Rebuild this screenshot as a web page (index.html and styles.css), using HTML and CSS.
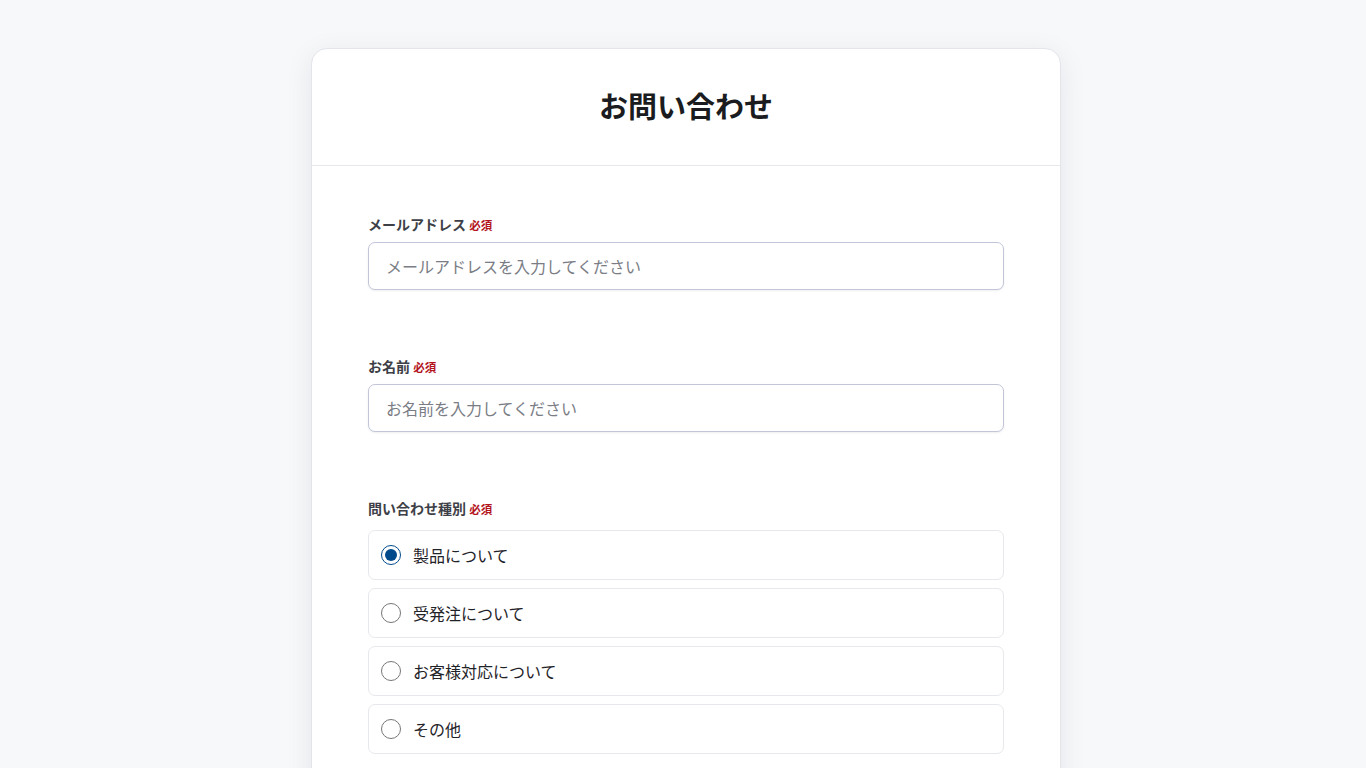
FILE: index.html
```html
<!DOCTYPE html>
<html lang="ja">
<head>
<meta charset="utf-8">
<title>お問い合わせ</title>
<link rel="stylesheet" href="styles.css">
</head>
<body>
<main class="card">
  <header class="card-header">
    <h1 class="title">お問い合わせ</h1>
  </header>
  <form class="card-body">
    <div class="field">
      <label class="label" for="email">メールアドレス <span class="req">必須</span></label>
      <input class="input" id="email" type="email" placeholder="メールアドレスを入力してください">
    </div>
    <div class="field">
      <label class="label" for="name">お名前 <span class="req">必須</span></label>
      <input class="input" id="name" type="text" placeholder="お名前を入力してください">
    </div>
    <div class="field">
      <div class="label label-group">問い合わせ種別 <span class="req">必須</span></div>
      <div class="options">
        <label class="option"><input class="radio" type="radio" name="kind" checked><span>製品について</span></label>
        <label class="option"><input class="radio" type="radio" name="kind"><span>受発注について</span></label>
        <label class="option"><input class="radio" type="radio" name="kind"><span>お客様対応について</span></label>
        <label class="option"><input class="radio" type="radio" name="kind"><span>その他</span></label>
      </div>
    </div>
  </form>
</main>
</body>
</html>
```
FILE: styles.css
```css
* { box-sizing: border-box; }
html, body { margin: 0; }
body {
  background: #f7f8fa;
  font-family: "Noto Sans CJK JP", "Noto Sans", sans-serif;
  color: #1f2328;
  padding-top: 48px;
  padding-left: 6px;
  overflow: hidden;
}
.card {
  width: 750px;
  margin: 0 auto;
  background: #ffffff;
  border: 1px solid #e3e5ea;
  border-radius: 16px;
  box-shadow: 0 6px 28px rgba(20, 24, 40, 0.08);
  min-height: 800px;
}
.card-header {
  height: 117px;
  border-bottom: 1px solid #e6e8ec;
  display: flex;
  align-items: center;
  justify-content: center;
}
.title {
  margin: 0;
  font-size: 29px;
  font-weight: 700;
  color: #1a1c20;
  line-height: 36px;
  padding-bottom: 4px;
}
.card-body {
  padding: 49px 56px 0;
  display: flex;
  flex-direction: column;
  gap: 67px;
}
.field { display: flex; flex-direction: column; }
.label {
  display: block;
  height: 18px;
  font-size: 14px;
  font-weight: 700;
  line-height: 18px;
  color: #3d4046;
  margin-bottom: 9px;
}
.label-group { margin-bottom: 13px; }
.req {
  font-size: 11.5px;
  line-height: 1;
  color: #b3141c;
  font-weight: 700;
}
.input {
  height: 48px;
  width: 100%;
  border: 1px solid #c3c6d8;
  border-radius: 7px;
  padding: 0 17px;
  font-family: inherit;
  font-size: 16px;
  color: #1f2328;
  background: #fff;
  box-shadow: 0 1px 2px rgba(30, 40, 80, 0.08);
  outline: none;
}
.input::placeholder { color: #7a7d85; }
.options { display: flex; flex-direction: column; gap: 8px; }
.option {
  height: 50px;
  border: 1px solid #e6e8ec;
  border-radius: 7px;
  display: flex;
  align-items: center;
  padding-left: 12px;
  gap: 12px;
  font-size: 16px;
  color: #1f2328;
}
.radio {
  width: 20px;
  height: 20px;
  margin: 0;
  accent-color: #004a8c;
}
```
